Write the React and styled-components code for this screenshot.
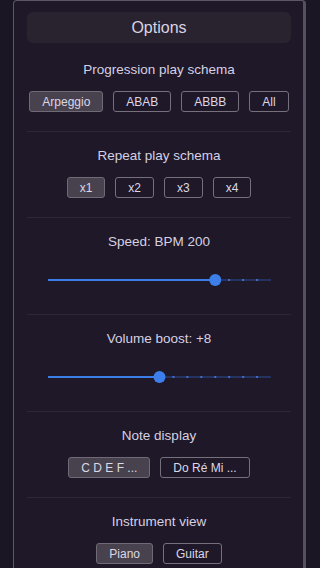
import styled, { createGlobalStyle } from "styled-components";

const GlobalStyle = createGlobalStyle`
  body {
    margin: 0;
    background: #1b1624;
    font-family: "Liberation Sans", Arial, sans-serif;
  }
`;

const sections = [
  {
    title: "Progression play schema",
    options: ["Arpeggio", "ABAB", "ABBB", "All"],
    active: 0,
  },
  { title: "Repeat play schema", options: ["x1", "x2", "x3", "x4"], active: 0 },
  { title: "Speed: BPM 200", slider: 0.75 },
  { title: "Volume boost: +8", slider: 0.5 },
  { title: "Note display", options: ["C D E F ...", "Do Ré Mi ..."], active: 0 },
  { title: "Instrument view", options: ["Piano", "Guitar"], active: 0 },
];

const STEPS = 16;
const W = 223;

// slider drawn as svg: rail, filled part, step ticks, thumb
const Slider = ({ value }) => {
  const x = value * W;
  const ticks = [];
  for (let i = 1; i < STEPS; i++) {
    if (i / STEPS > value + 0.02) ticks.push((i / STEPS) * W);
  }
  return (
    <SliderSvg width={W} height="16" viewBox={`0 0 ${W} 16`}>
      <rect x="0" y="7" width={W} height="2" fill="#26335e" />
      <rect x="0" y="7" width={x} height="2" fill="#3b7de6" />
      {ticks.map((t) => (
        <rect key={t} x={t - 1} y="7" width="2" height="2" fill="#3f6fcc" />
      ))}
      <circle cx={x} cy="8" r="6" fill="#3d7fea" />
    </SliderSvg>
  );
};

const App = () => {
  return (
    <>
      <GlobalStyle />
      <Panel>
        <Title>Options</Title>
        {sections.map((s, idx) => (
          <Section
            key={s.title}
            $first={idx === 0}
            $last={idx === sections.length - 1}
            $slider={!!s.slider}
          >
            <Label>{s.title}</Label>
            {s.slider ? (
              <Slider value={s.slider} />
            ) : (
              <ButtonRow>
                {s.options.map((o, i) => (
                  <OptionButton key={o} $active={i === s.active}>
                    {o}
                  </OptionButton>
                ))}
              </ButtonRow>
            )}
          </Section>
        ))}
      </Panel>
    </>
  );
};

const Panel = styled.div`
  box-sizing: border-box;
  margin-left: 13px;
  width: 293px;
  background: #1e1828;
  border: 1px solid #5c5764;
  border-right: 3px solid #56515e;
  border-bottom: none;
  border-radius: 4px 4px 0 0;
  padding: 11px 12px 30px 13px;
`;

const Title = styled.div`
  height: 31px;
  border-radius: 6px;
  background: #29232f;
  display: flex;
  align-items: center;
  justify-content: center;
  color: #d9d4e4;
  font-size: 16px;
`;

const Section = styled.div`
  display: flex;
  flex-direction: column;
  align-items: center;
  padding: ${(p) => (p.$first ? "19px" : "16px")} 0
    ${(p) => (p.$slider ? "26px" : "19px")};
  border-bottom: ${(p) => (p.$last ? "none" : "1px solid #2c2735")};
`;

const Label = styled.div`
  font-size: 13.5px;
  line-height: 16px;
  color: #d6d0e3;
  margin-bottom: 13px;
`;

const ButtonRow = styled.div`
  display: flex;
  gap: 10px;
  justify-content: center;
`;

const OptionButton = styled.button`
  box-sizing: border-box;
  height: 21px;
  padding: 0 12px;
  border-radius: 3px;
  border: 1px solid ${(p) => (p.$active ? "#6f6a76" : "#75707c")};
  background: ${(p) => (p.$active ? "#47424d" : "transparent")};
  color: #dcd8e6;
  font-family: "Liberation Sans", Arial, sans-serif;
  font-size: 12px;
  white-space: pre;
  cursor: pointer;
`;

const SliderSvg = styled.svg`
  display: block;
  margin-top: 9px;
  overflow: visible;
`;

export default App;
